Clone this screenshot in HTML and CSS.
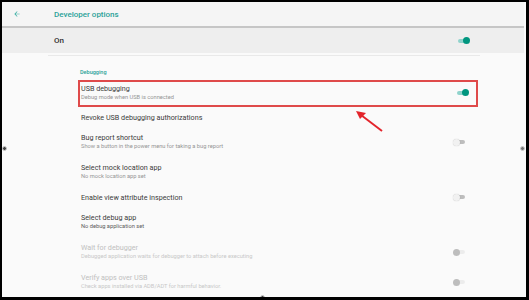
FILE: index.html
```html
<!DOCTYPE html>
<html lang="en">
  <head>
    <meta charset="UTF-8" />
    <meta name="viewport" content="width=device-width, initial-scale=1.0" />
    <title>Developer options</title>
    <link rel="stylesheet" href="styles.css">
  </head>
  <body>
    <div class="frame">
      <header class="appbar">
        <svg class="back" viewBox="0 0 24 24"><path d="M20 11H7.83l5.59-5.59L12 4l-8 8 8 8 1.41-1.41L7.83 13H20v-2z"/></svg>
        <h1>Developer options</h1>
      </header>

      <div class="master">
        <span>On</span>
        <span class="switch on"></span>
      </div>

      <section class="card">
        <h2 class="category">Debugging</h2>

        <div class="pref boxed">
          <div class="txt">
            <p class="title">USB debugging</p>
            <p class="summary">Debug mode when USB is connected</p>
          </div>
          <span class="switch on"></span>
        </div>

        <div class="pref single">
          <p class="title">Revoke USB debugging authorizations</p>
        </div>

        <div class="pref">
          <div class="txt">
            <p class="title">Bug report shortcut</p>
            <p class="summary">Show a button in the power menu for taking a bug report</p>
          </div>
          <span class="switch off"></span>
        </div>

        <div class="pref">
          <div class="txt">
            <p class="title">Select mock location app</p>
            <p class="summary">No mock location app set</p>
          </div>
        </div>

        <div class="pref single">
          <p class="title">Enable view attribute inspection</p>
          <span class="switch off"></span>
        </div>

        <div class="pref">
          <div class="txt">
            <p class="title">Select debug app</p>
            <p class="summary dark">No debug application set</p>
          </div>
        </div>

        <div class="pref disabled">
          <div class="txt">
            <p class="title">Wait for debugger</p>
            <p class="summary">Debugged application waits for debugger to attach before executing</p>
          </div>
          <span class="switch dis"></span>
        </div>

        <div class="pref disabled">
          <div class="txt">
            <p class="title">Verify apps over USB</p>
            <p class="summary">Check apps installed via ADB/ADT for harmful behavior.</p>
          </div>
          <span class="switch dis"></span>
        </div>
      </section>

      <!-- annotation arrow -->
      <svg class="pointer" width="529" height="300" viewBox="0 0 529 300">
        <line x1="382" y1="131" x2="361" y2="115" stroke="#e3242b" stroke-width="2"/>
        <path d="M356 111 L366 113 L360 119 Z" fill="#e3242b"/>
      </svg>

      <span class="handle h-left"></span>
      <span class="handle h-right"></span>
      <span class="handle h-bottom"></span>
    </div>
  </body>
</html>
```

FILE: styles.css
```css
* {
  box-sizing: border-box;
  margin: 0;
}
body {
  margin: 0;
  background: #fff;
  font-family: Roboto, "Noto Sans", sans-serif;
}
.frame {
  position: relative;
  width: 529px;
  height: 300px;
  border: 2px solid #000;
  border-right-width: 3px;
  border-bottom-width: 3px;
  background: #fafafa;
  overflow: hidden;
}

/*---top bar---*/
.appbar {
  display: flex;
  align-items: center;
  height: 26px;
  margin-right: 2px;
  padding-left: 11px;
  background: #f5f5f5;
  border-bottom: 2px solid #c6c6c6;
}
.back {
  width: 8px;
  height: 8px;
  fill: #3aaea3;
}
.appbar h1 {
  margin-left: 33px;
  font-size: 8px;
  font-weight: 500;
  color: #2aa198;
}

/*---master switch---*/
.master {
  display: flex;
  align-items: center;
  justify-content: space-between;
  height: 25px;
  margin-right: 2px;
  padding: 0 54px 0 52px;
  background: #eeeeee;
  font-size: 8px;
  font-weight: 500;
  color: #333;
}

/*---list---*/
.card {
  margin: 2px 46px 0 46px;
  padding-left: 30px;
  border-top: 1px solid #e9e9e9;
}
.category {
  padding: 12px 0 4px 2px;
  font-size: 5.5px;
  line-height: 8px;
  font-weight: 500;
  color: #2aa198;
}
.pref {
  display: flex;
  align-items: center;
  justify-content: space-between;
  height: 30px;
  padding: 0 14px 0 3px;
}
.pref.single {
  height: 20px;
}
.pref.boxed {
  height: 27px;
  margin-right: 2px;
  padding: 1px 7px 3px 1px;
  border: 2px solid #df4a4a;
}
.title {
  font-size: 7.2px;
  line-height: 9px;
  color: #3a3a3a;
}
.summary {
  font-size: 5.7px;
  line-height: 9px;
  color: #959595;
}
.summary.dark {
  color: #5a5a5a;
}
.disabled .title {
  color: #c0c0c0;
}
.disabled .summary {
  color: #c8c8c8;
}

/*---switches---*/
.switch {
  position: relative;
  width: 13px;
  height: 7px;
}
.switch::before {
  content: "";
  position: absolute;
  left: 1px;
  right: 1px;
  top: 1.5px;
  height: 4px;
  border-radius: 2px;
}
.switch::after {
  content: "";
  position: absolute;
  top: 0;
  width: 7px;
  height: 7px;
  border-radius: 50%;
}
.switch.on::before {
  background: #8fd3cc;
}
.switch.on::after {
  right: 0;
  background: #00967f;
}
.switch.off::before {
  background: #bdbdbd;
}
.switch.off::after {
  left: 0;
  background: #f1f1f1;
  box-shadow: 0 0 1px rgba(0, 0, 0, 0.25);
}
.switch.dis::before {
  background: #ececec;
}
.switch.dis::after {
  left: 0;
  background: #bdbdbd;
}

/*---overlays---*/
.pointer {
  position: absolute;
  left: -2px;
  top: -2px;
  pointer-events: none;
}
.handle {
  position: absolute;
  width: 5px;
  height: 5px;
  border-radius: 50%;
  background: #444;
  border: 1px solid #ccc;
}
.h-left {
  left: 0;
  top: 144px;
}
.h-right {
  right: 1px;
  top: 144px;
  background: #777;
}
.h-bottom {
  left: 258px;
  bottom: -3px;
}
```
